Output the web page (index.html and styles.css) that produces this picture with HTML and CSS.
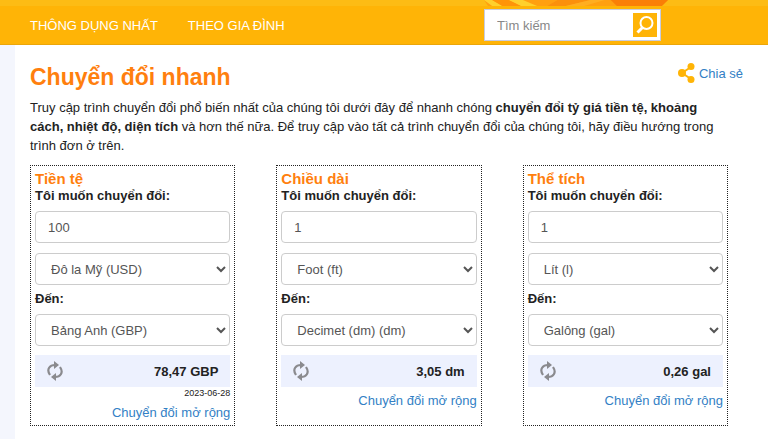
FILE: index.html
```
<!DOCTYPE html>
<html lang="vi">
<head>
  <meta charset="UTF-8">
  <meta name="viewport" content="width=device-width, initial-scale=1.0">
  <title>Chuyển đổi nhanh</title>
  <link rel="stylesheet" href="styles.css">
</head>
<body>
  <header>
    <div class="banner">
      <svg class="banner-art" viewBox="0 0 180 6" preserveAspectRatio="none" aria-hidden="true">
        <path d="M0 0h180l-6 6H4z" fill="#ffa010"/>
        <path d="M0 0h8l10 6H8zM24 0h14l14 6H36z" fill="#ffd02c"/>
        <path d="M8 0h16l12 6H18z" fill="#ff9408"/>
        <path d="M72 0h32l-24 6H62z" fill="#fb900c"/>
        <path d="M104 0h14l-20 6H80z" fill="#ffae20"/>
        <path d="M124 0h56l-6 6h-44z" fill="#fa7f06"/>
      </svg>
    </div>
    <nav class="navbar">
      <div class="menu">
        <a href="#">THÔNG DỤNG NHẤT</a>
        <a href="#">THEO GIA ĐÌNH</a>
      </div>
      <form class="search">
        <input type="text" placeholder="Tìm kiếm" aria-label="Tìm kiếm">
        <button type="button" aria-label="Tìm">
          <svg viewBox="0 0 24 24" width="24" height="24">
            <circle cx="13.500" cy="10" r="6" fill="none" stroke="#fff" stroke-width="2"/>
            <path d="M9.500 14.500L4.500 19.500" stroke="#fff" stroke-width="3"/>
          </svg>
        </button>
      </form>
    </nav>
  </header>

  <main>
    <div class="heading">
      <h1>Chuyển đổi nhanh</h1>
      <a class="share" href="#">
        <svg viewBox="0 0 17 20" width="17" height="20" aria-hidden="true">
          <path d="M13 4L4 10l9 6" fill="none" stroke="#ffb406" stroke-width="2"/>
          <circle cx="13" cy="3.500" r="3.500" fill="#ffb406"/>
          <circle cx="4" cy="10" r="4" fill="#ffb406"/>
          <circle cx="13" cy="16.500" r="3.500" fill="#ffb406"/>
        </svg>
        Chia sẻ
      </a>
    </div>
    <p class="intro">Truy cập trình chuyển đổi phổ biến nhất của chúng tôi dưới đây để nhanh chóng <b>chuyển đổi tỷ giá tiền tệ, khoảng cách, nhiệt độ, diện tích</b> và hơn thế nữa. Để truy cập vào tất cả trình chuyển đổi của chúng tôi, hãy điều hướng trong trình đơn ở trên.</p>

    <div class="cards">
      <section class="card">
        <h2>Tiền tệ</h2>
        <label for="money-value">Tôi muốn chuyển đổi:</label>
        <input class="control" id="money-value" type="text" value="100">
        <select class="control" aria-label="Từ tiền tệ">
          <option>Đô la Mỹ (USD)</option>
        </select>
        <label for="money-to">Đến:</label>
        <select class="control" id="money-to">
          <option>Bảng Anh (GBP)</option>
        </select>
        <div class="result">
          <button class="swap" type="button" aria-label="Hoán đổi">
            <svg viewBox="0 0 16 20" width="16" height="20">
              <path d="M3 14C-1 8 3 4 8 4M13 6c4 6 0 10-5 10" fill="none" stroke="#8a8a8e" stroke-width="2.200"/>
              <path d="M7 0l5 4-5 4zM9 12l-5 4 5 4z" fill="#8a8a8e"/>
            </svg>
          </button>
          <output>78,47 GBP</output>
        </div>
        <time class="date">2023-06-28</time>
        <a class="more" href="#">Chuyển đổi mở rộng</a>
      </section>

      <section class="card">
        <h2>Chiều dài</h2>
        <label for="length-value">Tôi muốn chuyển đổi:</label>
        <input class="control" id="length-value" type="text" value="1">
        <select class="control" aria-label="Từ chiều dài">
          <option>Foot (ft)</option>
        </select>
        <label for="length-to">Đến:</label>
        <select class="control" id="length-to">
          <option>Decimet (dm) (dm)</option>
        </select>
        <div class="result">
          <button class="swap" type="button" aria-label="Hoán đổi">
            <svg viewBox="0 0 16 20" width="16" height="20">
              <path d="M3 14C-1 8 3 4 8 4M13 6c4 6 0 10-5 10" fill="none" stroke="#8a8a8e" stroke-width="2.200"/>
              <path d="M7 0l5 4-5 4zM9 12l-5 4 5 4z" fill="#8a8a8e"/>
            </svg>
          </button>
          <output>3,05 dm</output>
        </div>
        <a class="more" href="#">Chuyển đổi mở rộng</a>
      </section>

      <section class="card">
        <h2>Thể tích</h2>
        <label for="volume-value">Tôi muốn chuyển đổi:</label>
        <input class="control" id="volume-value" type="text" value="1">
        <select class="control" aria-label="Từ thể tích">
          <option>Lít (l)</option>
        </select>
        <label for="volume-to">Đến:</label>
        <select class="control" id="volume-to">
          <option>Galông (gal)</option>
        </select>
        <div class="result">
          <button class="swap" type="button" aria-label="Hoán đổi">
            <svg viewBox="0 0 16 20" width="16" height="20">
              <path d="M3 14C-1 8 3 4 8 4M13 6c4 6 0 10-5 10" fill="none" stroke="#8a8a8e" stroke-width="2.200"/>
              <path d="M7 0l5 4-5 4zM9 12l-5 4 5 4z" fill="#8a8a8e"/>
            </svg>
          </button>
          <output>0,26 gal</output>
        </div>
        <a class="more" href="#">Chuyển đổi mở rộng</a>
      </section>
    </div>
  </main>
</body>
</html>
```
FILE: styles.css
```
* {
  box-sizing: border-box;
}
body {
  font-family: "Liberation Sans", Arial, sans-serif;
  font-size: 13px;
  line-height: 19px;
  margin: 0;
  background-color: #f4f6fd;
  color: #222;
}
a {
  color: #337fc5;
  text-decoration: none;
}
a:hover {
  text-decoration: underline;
}
button {
  border: 0;
  padding: 0;
  cursor: pointer;
}
svg {
  display: block;
}

/* header */
.banner {
  display: flex;
  justify-content: flex-end;
  padding-right: 100px;
  height: 6px;
  background-color: #fdbc14;
}
.banner-art {
  width: 184px;
  height: 6px;
}
.navbar {
  display: flex;
  justify-content: space-between;
  align-items: center;
  height: 39px;
  padding: 0 107px 0 30px;
  background-color: #ffb406;
  border-bottom: 1px solid #eba60a;
}
.menu {
  display: flex;
  gap: 30px;
}
.menu a {
  color: white;
}
.search {
  display: flex;
  align-items: center;
  width: 177px;
  height: 32px;
  padding-right: 3px;
  background: white;
  border: 1px solid #c8cce0;
}
.search input {
  flex: 1;
  min-width: 0;
  border: 0;
  padding: 0 12px;
  font: inherit;
  outline: 0;
}
.search input::placeholder {
  color: #888;
}
.search button {
  background-color: #ffb406;
}

/* content */
main {
  margin-left: 15px;
  padding: 18px 25px 16px 15px;
  background: white;
}
.heading {
  display: flex;
  justify-content: space-between;
  align-items: flex-start;
}
h1 {
  margin: 0;
  font-size: 23px;
  line-height: 28px;
  color: #ff7f0e;
}
.share {
  display: flex;
  align-items: center;
  gap: 4px;
}
.intro {
  margin: 7px 0 10px;
  padding-right: 15px;
}
.cards {
  display: grid;
  grid-template-columns: repeat(3, 1fr);
  gap: 41px;
  padding-right: 15px;
}
.card {
  display: flex;
  flex-direction: column;
  padding: 4px 4px 3px;
  border: 1px dotted #222;
}
h2 {
  margin: 0;
  font-size: 15px;
  line-height: 18px;
  color: #ff7f0e;
}
label {
  font-weight: bold;
  line-height: 16px;
}
.control {
  width: 100%;
  height: 32px;
  margin: 10px 0 0;
  padding: 0 12px;
  border: 1px solid #ccc;
  border-radius: 4px;
  background-color: white;
  color: #555;
  font: inherit;
}
select.control {
  padding: 0 11px;
}
label + .control {
  margin-top: 7px;
}
.control + label {
  margin-top: 6px;
}
.result {
  display: flex;
  justify-content: space-between;
  align-items: center;
  height: 32px;
  margin-top: 9px;
  padding: 0 12px;
  background-color: #edf1fe;
  font-weight: bold;
}
.swap {
  background: none;
}
.date {
  font-size: 9px;
  line-height: 12px;
  text-align: right;
}
.more {
  margin-top: 4px;
  align-self: flex-end;
}
```
